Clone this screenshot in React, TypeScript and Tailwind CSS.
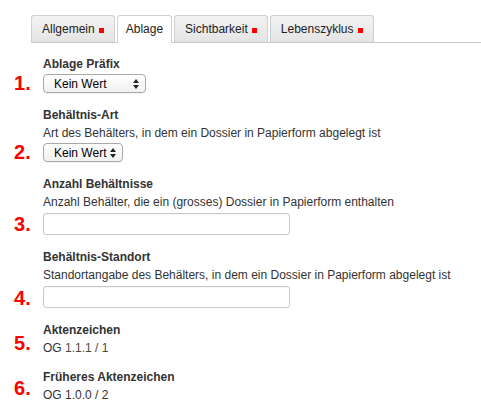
import React from 'react';

const tabs = [
  { label: 'Allgemein', marker: true },
  { label: 'Ablage', marker: false, active: true },
  { label: 'Sichtbarkeit', marker: true },
  { label: 'Lebenszyklus', marker: true },
];

const SelectBox = ({ width }: { width: string }) => (
  <div
    className={`${width} h-[19px] mt-px flex items-center justify-between pl-[10px] pr-[6px] rounded-[4px] border border-[#a9a9a9] bg-gradient-to-b from-white to-[#f1f1f1] shadow-[0_1px_0_rgba(0,0,0,0.05)] text-[12px] text-black`}
  >
    <span>Kein Wert</span>
    <svg width="6" height="10" viewBox="0 0 6 10">
      <path d="M0 4 L3 0 L6 4 Z" fill="#222" />
      <path d="M0 6 L3 10 L6 6 Z" fill="#222" />
    </svg>
  </div>
);

const TextInput = () => (
  <div className="w-[247px] h-[22px] mt-[2px] rounded-[3px] border border-[#c9c9c9] bg-white shadow-[inset_0_1px_1px_rgba(0,0,0,0.04)]" />
);

const Field = ({
  num,
  label,
  desc,
  children,
  numPad,
  mt,
}: {
  num: number;
  label: string;
  desc?: string;
  children: React.ReactNode;
  numPad: string;
  mt: string;
}) => (
  <div className={`flex items-end ${mt}`}>
    <div className={`w-[43px] shrink-0 pl-[14px] ${numPad} text-[20px] leading-[20px] font-bold text-[#ff0000]`}>
      {num}.
    </div>
    <div className="flex flex-col">
      <div className="text-[12px] leading-[18px] font-bold text-[#333]">{label}</div>
      {desc && <div className="text-[12px] leading-[18px] text-[#333]">{desc}</div>}
      {children}
    </div>
  </div>
);

export default function App() {
  return (
    <div className="w-[481px] h-[410px] bg-white overflow-hidden pt-[15px] font-['Liberation_Sans',Arial,sans-serif]">
      {/* Tab bar */}
      <div className="ml-[31px] flex items-end gap-[2px] border-b border-[#c6c6c6] h-[28px]">
        {tabs.map((t) => (
          <div
            key={t.label}
            className={`h-[28px] -mb-px flex items-center gap-[4px] rounded-t-[3px] border border-[#cfcfcf] text-[12px] text-[#222] ${
              t.active ? 'px-[8px] bg-white border-b-white' : 'px-[10px] bg-gradient-to-b from-[#f3f3f3] to-[#e4e4e4] border-b-[#c6c6c6]'
            }`}
          >
            <span>{t.label}</span>
            {t.marker && <span className="w-[5px] h-[5px] bg-[#ff0000] mt-[2px]" />}
          </div>
        ))}
      </div>

      <div className="flex flex-col">
        <Field num={1} label="Ablage Präfix" numPad="pb-[0px]" mt="mt-[12px]">
          <SelectBox width="w-[103px]" />
        </Field>
        <Field
          num={2}
          label="Behältnis-Art"
          desc="Art des Behälters, in dem ein Dossier in Papierform abgelegt ist"
          numPad="pb-[0px]"
          mt="mt-[13px]"
        >
          <SelectBox width="w-[80px]" />
        </Field>
        <Field
          num={3}
          label="Anzahl Behältnisse"
          desc="Anzahl Behälter, die ein (grosses) Dossier in Papierform enthalten"
          numPad="pb-[1px]"
          mt="mt-[13px]"
        >
          <TextInput />
        </Field>
        <Field
          num={4}
          label="Behältnis-Standort"
          desc="Standortangabe des Behälters, in dem ein Dossier in Papierform abgelegt ist"
          numPad="pb-[0px]"
          mt="mt-[13px]"
        >
          <TextInput />
        </Field>
        <Field num={5} label="Aktenzeichen" numPad="pb-[4px]" mt="mt-[13px]">
          <div className="text-[12px] leading-[18px] text-[#333]">
            OG <span className="text-[#4d4a3c]">1.1.1 / 1</span>
          </div>
        </Field>
        <Field num={6} label="Früheres Aktenzeichen" numPad="pb-[6px]" mt="mt-[11px]">
          <div className="text-[12px] leading-[18px] text-[#333]">OG 1.0.0 / 2</div>
        </Field>
      </div>
    </div>
  );
}
